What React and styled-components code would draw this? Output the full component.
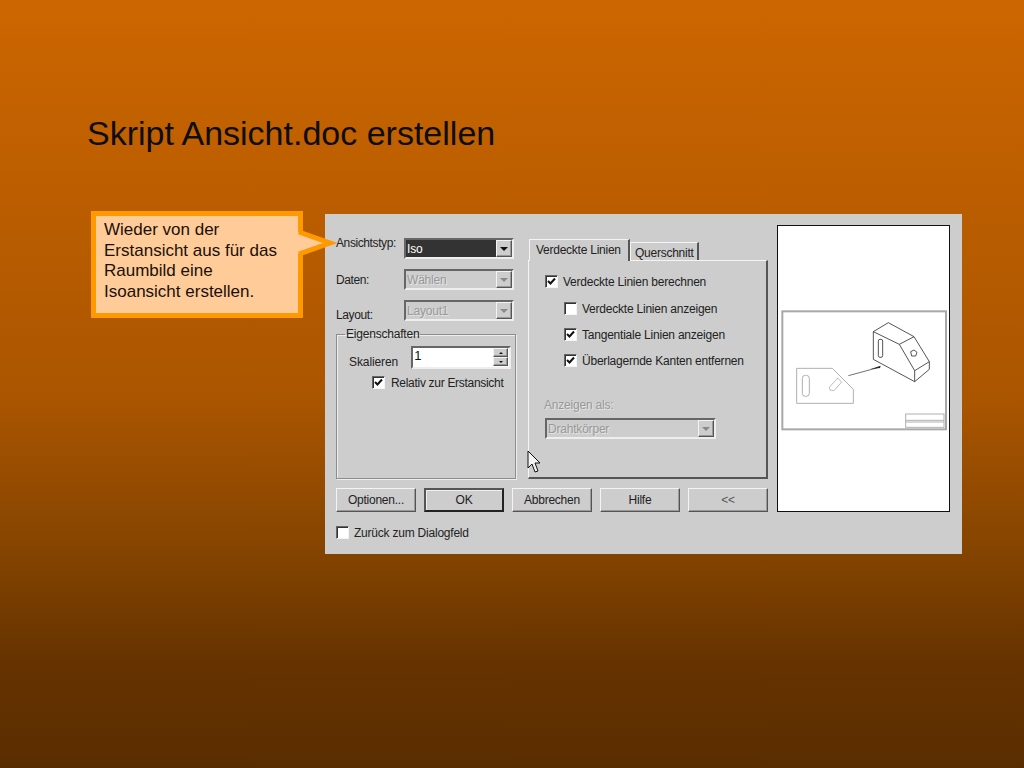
import React from 'react';
import styled, { createGlobalStyle, css } from 'styled-components';

const GlobalStyle = createGlobalStyle`
  html, body {
    margin: 0;
    padding: 0;
  }
  body {
    width: 1024px;
    height: 768px;
    overflow: hidden;
  }
`;

const Slide = styled.div`
  box-sizing: border-box;
  width: 1024px;
  height: 768px;
  padding: 114px 0 0 87px;
  background: linear-gradient(180deg, #cc6600 0%, #aa5500 52%, #844400 72%, #663300 86%, #5a2d00 100%);
  font-family: 'Liberation Sans', Arial, sans-serif;
`;

const Title = styled.h1`
  margin: 0 0 58px;
  font-size: 34px;
  line-height: 39px;
  font-weight: 400;
  color: #0d0d0d;
`;

const Content = styled.div`
  display: flex;
  align-items: flex-start;
  gap: 22px;
  margin-left: 4px;
`;

const Callout = styled.div`
  position: relative;
  z-index: 2;
  box-sizing: border-box;
  width: 212px;
  height: 107px;
  padding: 4px 4px 0 8px;
  border: 5px solid #ff9900;
  background: #ffcc99;
  color: #1a1008;
  font-size: 17px;
  line-height: 20.5px;
  white-space: nowrap;
`;

const CalloutTail = styled.svg`
  position: absolute;
  left: 195px;
  top: 5px;
  overflow: visible;
`;

const Dialog = styled.div`
  position: relative;
  box-sizing: border-box;
  display: flex;
  align-items: flex-start;
  width: 637px;
  height: 340px;
  margin-top: 3px;
  padding: 11px 12px 0 11px;
  background: #cdcdcd;
  color: #222;
  font-family: 'Liberation Sans', Arial, sans-serif;
  font-size: 12px;
  line-height: 14px;
`;

const MainArea = styled.div`
  display: flex;
  flex-direction: column;
  width: 432px;
`;

const Columns = styled.div`
  display: flex;
  gap: 12px;
  height: 254px;
`;

const FormColumn = styled.div`
  display: flex;
  flex-direction: column;
  width: 180px;
  padding-top: 13px;
`;

const FieldRow = styled.div`
  display: flex;
  align-items: center;
  justify-content: space-between;
  width: 178px;
  height: 21px;
  margin-bottom: 10px;
`;

const FieldLabel = styled.span`
  position: relative;
  top: ${(p) => p.$shift || 0}px;
  letter-spacing: -0.4px;
`;

const sunken = css`
  box-sizing: border-box;
  border-style: solid;
  border-width: 2px;
  border-color: #666 #eee #eee #666;
`;

const raised = css`
  box-sizing: border-box;
  border-style: solid;
  border-width: 1px;
  border-color: #f4f4f4 #555 #555 #f4f4f4;
  background: #cdcdcd;
  box-shadow: inset -1px -1px 0 #999;
`;

const Combo = styled.div`
  ${sunken}
  display: flex;
  align-items: center;
  justify-content: space-between;
  width: ${(p) => p.$width || 110}px;
  height: 21px;
  background: #cdcdcd;
`;

const ComboValue = styled.span`
  flex: 1;
  align-self: stretch;
  display: flex;
  align-items: center;
  padding-left: 1px;
  letter-spacing: -0.2px;
  ${(p) =>
    p.$active &&
    css`
      background: #333333;
      color: #fff;
    `}
  ${(p) =>
    p.$disabled &&
    css`
      color: #999;
      text-shadow: 1px 1px 0 #e4e4e4;
    `}
`;

const ComboButton = styled.span`
  ${raised}
  display: flex;
  align-items: center;
  justify-content: center;
  width: 16px;
  height: 17px;
`;

const ArrowDown = styled.span`
  width: 0;
  height: 0;
  border-left: 4px solid transparent;
  border-right: 4px solid transparent;
  border-top: 4px solid ${(p) => (p.$disabled ? '#8a8a8a' : '#111')};
`;

const Group = styled.fieldset`
  box-sizing: border-box;
  height: 152px;
  width: 180px;
  min-width: 0;
  margin: -4px 0 0;
  padding: 5px 4px 0 12px;
  border: 1px solid #8c8c8c;
  box-shadow: 1px 1px 0 #eee, inset 1px 1px 0 #eee;
`;

const GroupTitle = styled.legend`
  margin-left: -4px;
  padding: 0 1px;
  line-height: 14px;
  letter-spacing: -0.2px;
`;

const ScaleRow = styled.div`
  display: flex;
  align-items: flex-start;
  gap: 13px;
`;

const ScaleLabel = styled.span`
  padding-top: 9px;
  letter-spacing: -0.1px;
`;

const SpinInput = styled.div`
  ${sunken}
  display: flex;
  justify-content: space-between;
  width: 100px;
  height: 23px;
  padding: 0 1px 1px 1px;
  background: #fff;
  font-size: 13px;
  line-height: 15px;
  color: #111;
`;

const SpinButtons = styled.div`
  display: flex;
  flex-direction: column;
  width: 15px;
`;

const SpinButton = styled.span`
  ${raised}
  flex: 1;
  display: flex;
  align-items: center;
  justify-content: center;
`;

const SpinArrow = styled.span`
  width: 0;
  height: 0;
  border-left: 2px solid transparent;
  border-right: 2px solid transparent;
  ${(p) => (p.$up ? 'border-bottom: 2px solid #111;' : 'border-top: 2px solid #111;')}
`;

const CheckRow = styled.div`
  display: flex;
  align-items: center;
  gap: ${(p) => p.$gap || 5}px;
  height: 13px;
  margin-left: ${(p) => p.$indent || 0}px;
  margin-top: ${(p) => p.$top || 0}px;
  letter-spacing: ${(p) => (p.$tight ? '-0.3px' : '-0.22px')};
  white-space: nowrap;
`;

const CheckBox = styled.span`
  box-sizing: border-box;
  display: inline-flex;
  align-items: center;
  justify-content: center;
  flex: none;
  width: 13px;
  height: 13px;
  border-style: solid;
  border-width: 1px;
  border-color: #666 #f4f4f4 #f4f4f4 #666;
  box-shadow: inset 1px 1px 0 #333;
  background: #fff;
`;

const TabColumn = styled.div`
  display: flex;
  flex-direction: column;
  width: 241px;
  padding-top: 14px;
`;

const TabBar = styled.div`
  display: flex;
  align-items: flex-end;
  height: 21px;
  padding-left: 1px;
`;

const Tab = styled.div`
  box-sizing: border-box;
  position: relative;
  width: ${(p) => p.$width}px;
  height: ${(p) => (p.$active ? 22 : 18)}px;
  margin-bottom: ${(p) => (p.$active ? -1 : 0)}px;
  padding: ${(p) => (p.$active ? '3px 0 0 6px' : '3px 0 0 4px')};
  border-style: solid;
  border-width: 1px 2px 0 1px;
  border-color: #f4f4f4 #555 transparent #f4f4f4;
  background: #cdcdcd;
  letter-spacing: -0.25px;
  white-space: nowrap;
  z-index: ${(p) => (p.$active ? 1 : 0)};
`;

const TabPanel = styled.div`
  box-sizing: border-box;
  height: 219px;
  padding: 14px 0 0 16px;
  border-style: solid;
  border-width: 1px 2px 2px 1px;
  border-color: #f4f4f4 #555 #555 #f4f4f4;
`;

const DisabledLabel = styled.div`
  margin: 31px 0 6px -1px;
  color: #999;
  text-shadow: 1px 1px 0 #e4e4e4;
  letter-spacing: -0.2px;
`;

const ButtonRow = styled.div`
  display: flex;
  gap: 8px;
  margin-top: 9px;
`;

const Button = styled.button`
  ${raised}
  width: 80px;
  height: 24px;
  padding: 0;
  font-family: inherit;
  font-size: 12px;
  color: ${(p) => (p.$muted ? '#555' : '#222')};
  letter-spacing: -0.25px;
  ${(p) =>
    p.$primary &&
    css`
      border: 2px solid #333;
      border-color: #555 #222 #222 #555;
      box-shadow: inset 1px 1px 0 #eee;
    `}
`;

const Preview = styled.div`
  box-sizing: border-box;
  flex: none;
  width: 173px;
  height: 287px;
  margin-left: 9px;
  padding-top: 74px;
  border: 1px solid #111;
  background: #fff;
`;

const Cursor = styled.svg`
  position: absolute;
  left: 202px;
  top: 236px;
`;

const Check = () => (
  <svg width="9" height="9" viewBox="0 0 9 9">
    <path d="M1 4 L3.5 6.5 L8 1.5" fill="none" stroke="#111" strokeWidth="2" />
  </svg>
);

const Option = ({ checked, children, ...rest }) => (
  <CheckRow {...rest}>
    <CheckBox>{checked && <Check />}</CheckBox>
    <span>{children}</span>
  </CheckRow>
);

const Select = ({ value, width, active, disabled }) => (
  <Combo $width={width}>
    <ComboValue $active={active} $disabled={disabled}>
      {value}
    </ComboValue>
    <ComboButton>
      <ArrowDown $disabled={disabled} />
    </ComboButton>
  </Combo>
);

const SheetDrawing = () => (
  <svg width="171" height="140" viewBox="24 0 513 420" style={{ display: 'block' }}>
    <rect x="37" y="34" width="491" height="354" fill="#fff" stroke="#a8a8a8" strokeWidth="6" />
    <g fill="none" stroke="#b0b0b0" strokeWidth="3">
      <path d="M80 205 H187 L250 268 V310 H80 Z" />
      <rect x="97" y="226" width="21" height="63" rx="9" />
      <path d="M178 262 L203 234 L215 246 L192 272 L180 270 Z" strokeWidth="2.5" />
      <rect x="407" y="342" width="115" height="40" />
      <path d="M407 361 H522 M407 366 H522" />
    </g>
    <g fill="none" stroke="#333" strokeWidth="2.5">
      <path d="M310 95 L355 68 L432 110 L478 185 V208 L434 245 L310 178 Z" />
      <path d="M310 95 L388 133 L432 110 M388 133 L434 212 L478 185 M434 212 V245" />
      <rect x="325" y="118" width="13" height="54" rx="5" />
      <path d="M422 155 L432 150 L441 157 L437 168 L425 168 Z" />
      <path d="M235 227 L320 204" stroke="#555" />
    </g>
    <path d="M300 208 L332 197 L330 204 Z" fill="#222" />
  </svg>
);

export default function App() {
  return (
    <>
      <GlobalStyle />
      <Slide>
        <Title>Skript Ansicht.doc erstellen</Title>
        <Content>
          <Callout>
            Wieder von der
            <br />
            Erstansicht aus für das
            <br />
            Raumbild eine
            <br />
            Isoansicht erstellen.
            <CalloutTail width="50" height="50" viewBox="0 0 50 50">
              <path d="M6 11 L39 22 L6 33 Z" fill="#ffcc99" />
              <path d="M8 11 L39 22 L8 33" fill="none" stroke="#ff9900" strokeWidth="5" />
            </CalloutTail>
          </Callout>
          <Dialog>
            <MainArea>
              <Columns>
                <FormColumn>
                  <FieldRow>
                    <FieldLabel $shift={-6}>Ansichtstyp:</FieldLabel>
                    <Select value="Iso" active />
                  </FieldRow>
                  <FieldRow>
                    <FieldLabel>Daten:</FieldLabel>
                    <Select value="Wählen" disabled />
                  </FieldRow>
                  <FieldRow>
                    <FieldLabel $shift={4}>Layout:</FieldLabel>
                    <Select value="Layout1" disabled />
                  </FieldRow>
                  <Group>
                    <GroupTitle>Eigenschaften</GroupTitle>
                    <ScaleRow>
                      <ScaleLabel>Skalieren</ScaleLabel>
                      <SpinInput>
                        1
                        <SpinButtons>
                          <SpinButton>
                            <SpinArrow $up />
                          </SpinButton>
                          <SpinButton>
                            <SpinArrow />
                          </SpinButton>
                        </SpinButtons>
                      </SpinInput>
                    </ScaleRow>
                    <Option checked $indent={23} $top={7} $gap={6} $tight>
                      Relativ zur Erstansicht
                    </Option>
                  </Group>
                </FormColumn>
                <TabColumn>
                  <TabBar>
                    <Tab $active $width={101}>
                      Verdeckte Linien
                    </Tab>
                    <Tab $width={69}>Querschnitt</Tab>
                  </TabBar>
                  <TabPanel>
                    <Option checked>Verdeckte Linien berechnen</Option>
                    <Option $indent={19} $top={14} $gap={5}>
                      Verdeckte Linien anzeigen
                    </Option>
                    <Option checked $indent={19} $top={13} $gap={5}>
                      Tangentiale Linien anzeigen
                    </Option>
                    <Option checked $indent={19} $top={13} $gap={5}>
                      Überlagernde Kanten entfernen
                    </Option>
                    <DisabledLabel>Anzeigen als:</DisabledLabel>
                    <Select value="Drahtkörper" width={171} disabled />
                  </TabPanel>
                </TabColumn>
              </Columns>
              <ButtonRow>
                <Button>Optionen...</Button>
                <Button $primary>OK</Button>
                <Button>Abbrechen</Button>
                <Button>Hilfe</Button>
                <Button $muted>&lt;&lt;</Button>
              </ButtonRow>
              <Option $top={14}>Zurück zum Dialogfeld</Option>
            </MainArea>
            <Preview>
              <SheetDrawing />
            </Preview>
            <Cursor width="15" height="24" viewBox="0 0 15 24">
              <path
                d="M1 1 L1 18 L5 14 L8 22 L11 21 L8 13 L13 13 Z"
                fill="#f4f4f4"
                stroke="#111"
                strokeWidth="1"
              />
            </Cursor>
          </Dialog>
        </Content>
      </Slide>
    </>
  );
}
